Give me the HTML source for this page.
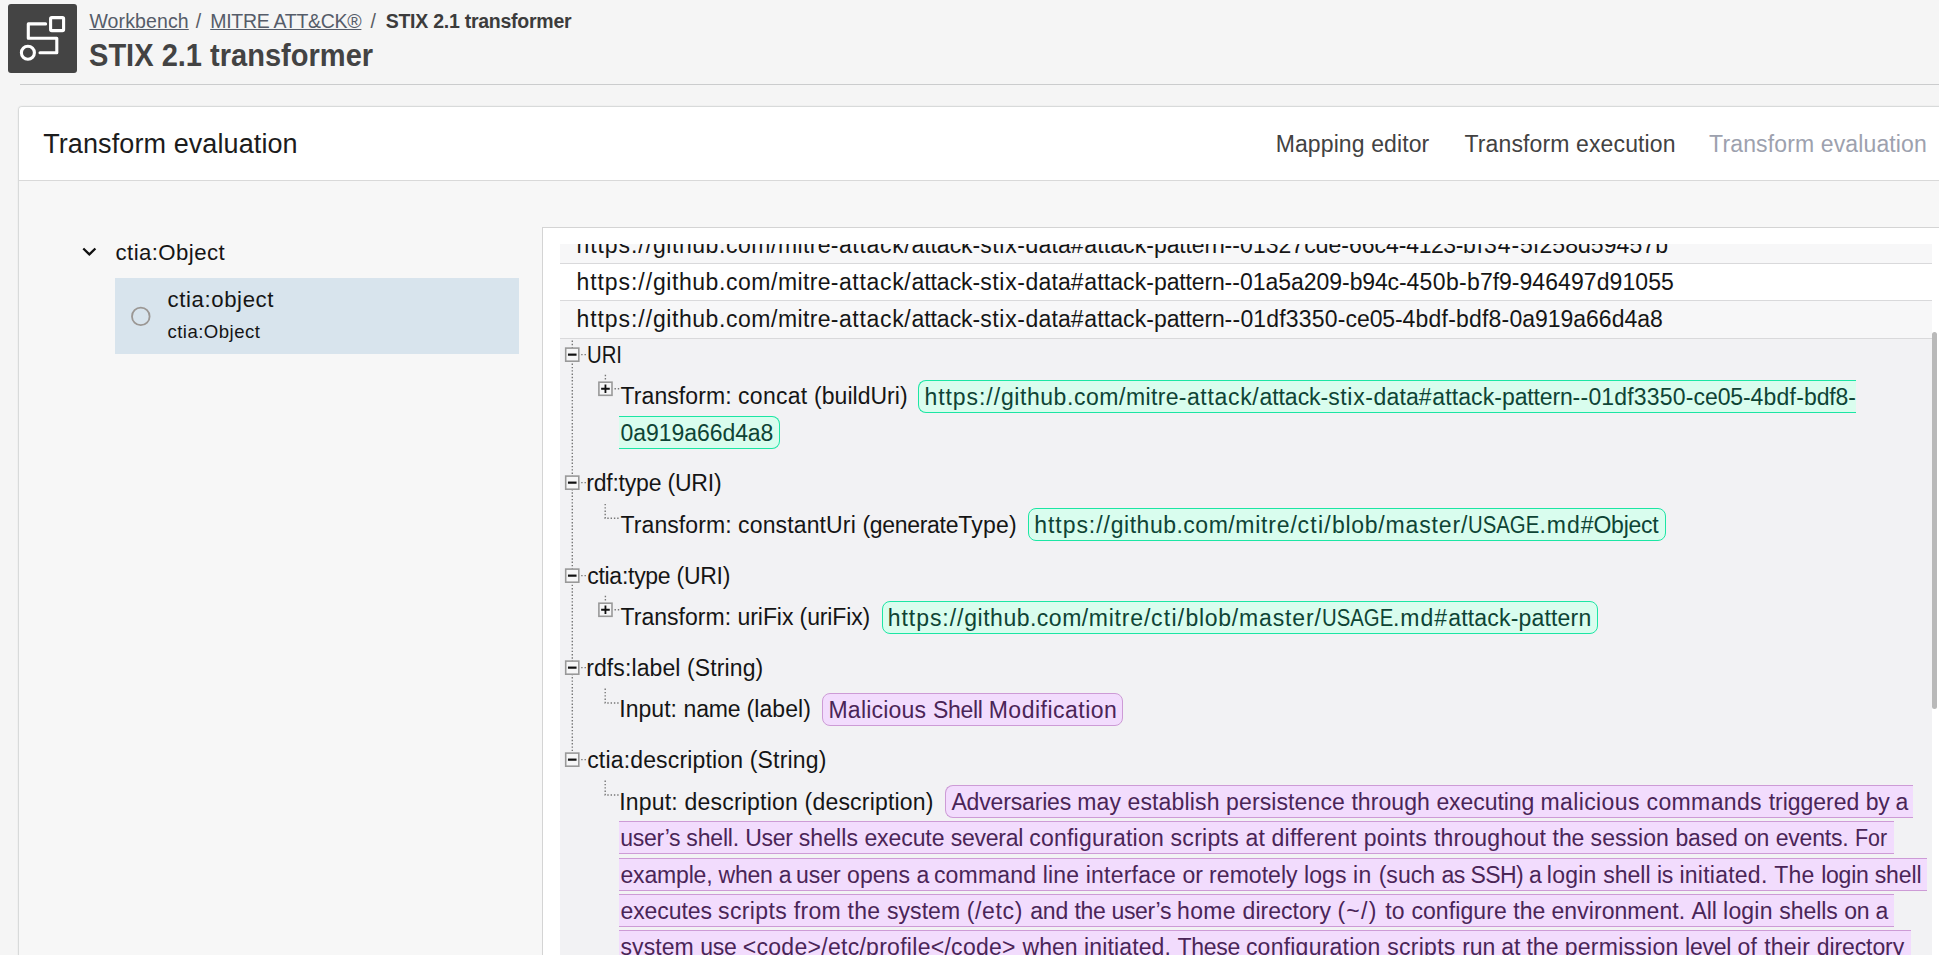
<!DOCTYPE html><html><head><meta charset="utf-8"><title>STIX 2.1 transformer</title><style>
*{box-sizing:border-box;margin:0;padding:0}
html,body{width:1939px;height:955px;overflow:hidden;background:#f5f5f5;font-family:"Liberation Sans",sans-serif;}
body{position:relative}
.a{position:absolute}
.t{position:absolute;white-space:pre;display:block;transform-origin:0 50%}
.u{text-decoration:underline;text-decoration-thickness:1.4px;text-underline-offset:1.2px}
#icon{left:8px;top:4px;width:69px;height:69px;background:#444;border-radius:3px}
#hr{left:20px;top:84px;right:0;height:1px;background:#cbcccd}
#card{left:18px;top:106px;width:1960px;height:900px;background:#f7f7f7;border:1px solid #d8dada;box-shadow:0 0 1.5px rgba(0,0,0,.10);border-radius:4px;overflow:hidden}
#cardhead{left:0;top:0;right:0;height:74px;background:#fff;border-bottom:1px solid #d9d9d9}
#sel{left:115px;top:278px;width:404px;height:76px;background:#d8e4ed}
#panel{left:542px;top:227px;width:1420px;height:760px;background:#fff;border:1px solid #d4d4d4}
.row{left:560px;width:1372px}
#r1{top:244px;height:19.5px;background:#f7f7f8}
#r2{top:264px;height:36.5px;background:#fff}
#r3{top:301px;height:37.5px;background:#f7f7f8}
.rb{left:560px;width:1372px;height:1px;background:#d9d9db}
#detail{left:560px;top:339px;width:1372px;height:620px;background:#f2f2f4}
#thumb{left:1932px;top:332px;width:5px;height:377px;border-radius:2.5px;background:#b9b9b9}
.chip{position:absolute;border:1px solid}
.g{background:#d9fdee;border-color:#1ce6a4}
.p{background:#f2dcfd;border-color:#cd9bd6}
</style></head><body>
<div class="a" id="icon"><svg width="69" height="69" viewBox="0 0 69 69" style="position:absolute;left:0;top:0"><g fill="none" stroke="#fff" stroke-width="3.1" stroke-linejoin="round" stroke-linecap="round"><rect x="42.6" y="13.6" width="13" height="13" rx="1.2"/><circle cx="19.9" cy="48.8" r="6.5"/><path d="M37.6 19.9H20.3V34.3H48.8V48.8H32"/></g></svg></div>
<div class="a" id="hr"></div>
<div class="a" id="card"><div class="a" id="cardhead"></div></div>
<div class="a" id="sel"></div>
<svg class="a" style="left:0;top:0" width="130" height="280" viewBox="0 0 130 280"><path transform="translate(75.65 237.83) scale(1.1417)" d="M16.59 8.59L12 13.17 7.41 8.59 6 10l6 6 6-6z" fill="#111"/></svg>
<div class="a" id="panel"></div>
<div class="a row" id="r1"></div><div class="a rb" style="top:263px"></div>
<div class="a row" id="r2"></div><div class="a rb" style="top:300px"></div>
<div class="a row" id="r3"></div><div class="a rb" style="top:338px"></div>
<div class="a" id="detail"></div>
<div class="a" id="thumb"></div>
<div class="chip g" style="left:917.8px;top:380px;width:938.2px;height:33px;border-radius:8px 0px 0px 8px;border-right:0;"></div>
<div class="chip g" style="left:619px;top:416px;width:160.8px;height:33px;border-radius:0px 8px 8px 0px;border-left:0;"></div>
<div class="chip g" style="left:1027.9px;top:508px;width:637.9px;height:33px;border-radius:8px 8px 8px 8px;"></div>
<div class="chip g" style="left:881.9px;top:601px;width:716.1px;height:33px;border-radius:8px 8px 8px 8px;"></div>
<div class="chip p" style="left:822.4px;top:693px;width:300.2px;height:33px;border-radius:8px 8px 8px 8px;"></div>
<div class="chip p" style="left:945px;top:785px;width:967.7px;height:33px;border-radius:8px 0px 0px 8px;border-right:0;"></div>
<div class="chip p" style="left:619px;top:821px;width:1274.8px;height:33px;border-radius:0px 0px 0px 0px;border-left:0;border-right:0;"></div>
<div class="chip p" style="left:619px;top:858px;width:1308.1px;height:33px;border-radius:0px 0px 0px 0px;border-left:0;border-right:0;"></div>
<div class="chip p" style="left:619px;top:894px;width:1274.8px;height:33px;border-radius:0px 0px 0px 0px;border-left:0;border-right:0;"></div>
<div class="chip p" style="left:619px;top:930px;width:1292.1px;height:33px;border-radius:0px 0px 0px 0px;border-left:0;border-right:0;"></div>
<svg class="a" style="left:0;top:0" width="1939" height="955" viewBox="0 0 1939 955"><path d="M572.3 340.5V752.0" stroke="#777777" stroke-width="1.4" stroke-dasharray="1.4 1.9" fill="none"/><rect x="565.70" y="348.10" width="13.10" height="13.10" fill="#f6f6f7" stroke="#999999" stroke-width="1.6"/><path d="M567.95 354.65H576.55" stroke="#111" stroke-width="2.2" fill="none"/><path d="M581.2 354.6H587.0" stroke="#777777" stroke-width="1.4" stroke-dasharray="1.4 1.9" fill="none"/><rect x="565.70" y="476.10" width="13.10" height="13.10" fill="#f6f6f7" stroke="#999999" stroke-width="1.6"/><path d="M567.95 482.65H576.55" stroke="#111" stroke-width="2.2" fill="none"/><path d="M581.2 482.6H587.0" stroke="#777777" stroke-width="1.4" stroke-dasharray="1.4 1.9" fill="none"/><rect x="565.70" y="569.10" width="13.10" height="13.10" fill="#f6f6f7" stroke="#999999" stroke-width="1.6"/><path d="M567.95 575.65H576.55" stroke="#111" stroke-width="2.2" fill="none"/><path d="M581.2 575.6H587.0" stroke="#777777" stroke-width="1.4" stroke-dasharray="1.4 1.9" fill="none"/><rect x="565.70" y="661.10" width="13.10" height="13.10" fill="#f6f6f7" stroke="#999999" stroke-width="1.6"/><path d="M567.95 667.65H576.55" stroke="#111" stroke-width="2.2" fill="none"/><path d="M581.2 667.6H587.0" stroke="#777777" stroke-width="1.4" stroke-dasharray="1.4 1.9" fill="none"/><rect x="565.70" y="753.10" width="13.10" height="13.10" fill="#f6f6f7" stroke="#999999" stroke-width="1.6"/><path d="M567.95 759.65H576.55" stroke="#111" stroke-width="2.2" fill="none"/><path d="M581.2 759.6H587.0" stroke="#777777" stroke-width="1.4" stroke-dasharray="1.4 1.9" fill="none"/><path d="M605.4 374.8V381.0" stroke="#777777" stroke-width="1.4" stroke-dasharray="1.4 1.9" fill="none"/><rect x="598.90" y="382.20" width="13.10" height="13.10" fill="#f6f6f7" stroke="#999999" stroke-width="1.6"/><path d="M601.15 388.75H609.75M605.45 384.55V392.95" stroke="#111" stroke-width="1.8" fill="none"/><path d="M614.5 388.7H620.0" stroke="#777777" stroke-width="1.4" stroke-dasharray="1.4 1.9" fill="none"/><path d="M605.4 595.8V602.0" stroke="#777777" stroke-width="1.4" stroke-dasharray="1.4 1.9" fill="none"/><rect x="598.90" y="603.20" width="13.10" height="13.10" fill="#f6f6f7" stroke="#999999" stroke-width="1.6"/><path d="M601.15 609.75H609.75M605.45 605.55V613.95" stroke="#111" stroke-width="1.8" fill="none"/><path d="M614.5 609.7H620.0" stroke="#777777" stroke-width="1.4" stroke-dasharray="1.4 1.9" fill="none"/><path d="M605.2 503.9V518.3H619" stroke="#777777" stroke-width="1.4" stroke-dasharray="1.4 1.9" fill="none"/><path d="M605.2 688.6V703.0H619" stroke="#777777" stroke-width="1.4" stroke-dasharray="1.4 1.9" fill="none"/><path d="M605.2 780.6V795.0H619" stroke="#777777" stroke-width="1.4" stroke-dasharray="1.4 1.9" fill="none"/><circle cx="140.8" cy="316.4" r="8.8" fill="none" stroke="#9b9794" stroke-width="1.8"/></svg>
<span class="t" style="left:576.50px;top:230px;font-size:23px;line-height:30px;color:#151515;letter-spacing:0.933px;">https://</span>
<span class="t" style="left:653.00px;top:230px;font-size:23px;line-height:30px;color:#151515;letter-spacing:0.546px;">github.com/</span>
<span class="t" style="left:777.90px;top:230px;font-size:23px;line-height:30px;color:#151515;letter-spacing:0.372px;">mitre-</span>
<span class="t" style="left:838.90px;top:230px;font-size:23px;line-height:30px;color:#151515;letter-spacing:0.678px;">attack/</span>
<span class="t" style="left:911.40px;top:230px;font-size:23px;line-height:30px;color:#151515;letter-spacing:-0.032px;">attack-</span>
<span class="t" style="left:980.20px;top:230px;font-size:23px;line-height:30px;color:#151515;letter-spacing:0.648px;">stix-</span>
<span class="t" style="left:1025.60px;top:230px;font-size:23px;line-height:30px;color:#151515;letter-spacing:0.109px;">data</span>
<span class="t" style="left:1070.80px;top:230px;font-size:23px;line-height:30px;color:#151515;letter-spacing:0.708px;">#</span>
<span class="t" style="left:1084.30px;top:230px;font-size:23px;line-height:30px;color:#151515;letter-spacing:0.111px;">attack-</span>
<span class="t" style="left:1154.10px;top:230px;font-size:23px;line-height:30px;color:#151515;letter-spacing:-0.158px;">pattern</span>
<span class="t" style="left:1224.60px;top:230px;font-size:23px;line-height:30px;color:#151515;letter-spacing:0.091px;">--</span>
<span class="t" style="left:1240.10px;top:230px;font-size:23px;line-height:30px;color:#151515;letter-spacing:0.022px;">01327cde-</span>
<span class="t" style="left:1349.00px;top:230px;font-size:23px;line-height:30px;color:#151515;letter-spacing:-0.047px;">66c4-</span>
<span class="t" style="left:1406.30px;top:230px;font-size:23px;line-height:30px;color:#151515;letter-spacing:-0.445px;">4123-</span>
<span class="t" style="left:1462.90px;top:230px;font-size:23px;line-height:30px;color:#151515;letter-spacing:0.955px;">bf34-</span>
<span class="t" style="left:1520.10px;top:230px;font-size:23px;line-height:30px;color:#151515;letter-spacing:0.072px;">5f258d59457b</span>
<div class="a" style="left:543px;top:228px;width:1396px;height:16px;background:#fff"></div>
<span class="t u" style="left:89.40px;top:8px;font-size:19.5px;line-height:26px;color:#555c69;letter-spacing:0.122px;">Workbench</span>
<span class="t" style="left:195.80px;top:8px;font-size:19.5px;line-height:26px;color:#5a5d64;">/</span>
<span class="t u" style="left:210.20px;top:8px;font-size:19.5px;line-height:26px;color:#555c69;letter-spacing:-0.280px;">MITRE ATT&amp;CK®</span>
<span class="t" style="left:370.40px;top:8px;font-size:19.5px;line-height:26px;color:#5a5d64;">/</span>
<span class="t" style="left:385.70px;top:8px;font-size:19.5px;line-height:26px;color:#3c3c3c;letter-spacing:-0.255px;font-weight:700;">STIX 2.1 transformer</span>
<span class="t" style="left:89.40px;top:36px;font-size:30.7px;line-height:39px;color:#434343;transform:scaleX(0.9466);font-weight:700;">STIX 2.1 transformer</span>
<span class="t" style="left:43.20px;top:127px;font-size:27px;line-height:34px;color:#1c1c1c;letter-spacing:0.095px;">Transform evaluation</span>
<span class="t" style="left:1275.70px;top:129px;font-size:23px;line-height:30px;color:#424242;letter-spacing:0.108px;">Mapping editor</span>
<span class="t" style="left:1464.50px;top:129px;font-size:23px;line-height:30px;color:#424242;letter-spacing:0.123px;">Transform execution</span>
<span class="t" style="left:1709.10px;top:129px;font-size:23px;line-height:30px;color:#9da1ae;letter-spacing:0.132px;">Transform evaluation</span>
<span class="t" style="left:115.60px;top:238px;font-size:22.2px;line-height:29px;color:#151515;letter-spacing:0.415px;">ctia:Object</span>
<span class="t" style="left:167.50px;top:285px;font-size:22.2px;line-height:29px;color:#151515;letter-spacing:0.607px;">ctia:object</span>
<span class="t" style="left:167.50px;top:319px;font-size:18.6px;line-height:25px;color:#151515;letter-spacing:0.453px;">ctia:Object</span>
<span class="t" style="left:576.50px;top:267px;font-size:23px;line-height:30px;color:#151515;letter-spacing:0.933px;">https://</span>
<span class="t" style="left:653.00px;top:267px;font-size:23px;line-height:30px;color:#151515;letter-spacing:0.546px;">github.com/</span>
<span class="t" style="left:777.90px;top:267px;font-size:23px;line-height:30px;color:#151515;letter-spacing:0.372px;">mitre-</span>
<span class="t" style="left:838.90px;top:267px;font-size:23px;line-height:30px;color:#151515;letter-spacing:0.678px;">attack/</span>
<span class="t" style="left:911.40px;top:267px;font-size:23px;line-height:30px;color:#151515;letter-spacing:-0.032px;">attack-</span>
<span class="t" style="left:980.20px;top:267px;font-size:23px;line-height:30px;color:#151515;letter-spacing:0.648px;">stix-</span>
<span class="t" style="left:1025.60px;top:267px;font-size:23px;line-height:30px;color:#151515;letter-spacing:0.109px;">data</span>
<span class="t" style="left:1070.80px;top:267px;font-size:23px;line-height:30px;color:#151515;letter-spacing:0.708px;">#</span>
<span class="t" style="left:1084.30px;top:267px;font-size:23px;line-height:30px;color:#151515;letter-spacing:0.111px;">attack-</span>
<span class="t" style="left:1154.10px;top:267px;font-size:23px;line-height:30px;color:#151515;letter-spacing:-0.158px;">pattern</span>
<span class="t" style="left:1224.60px;top:267px;font-size:23px;line-height:30px;color:#151515;letter-spacing:0.091px;">--</span>
<span class="t" style="left:1240.10px;top:267px;font-size:23px;line-height:30px;color:#151515;letter-spacing:-0.043px;">01a5a209-</span>
<span class="t" style="left:1349.70px;top:267px;font-size:23px;line-height:30px;color:#151515;letter-spacing:-0.167px;">b94c-</span>
<span class="t" style="left:1406.40px;top:267px;font-size:23px;line-height:30px;color:#151515;letter-spacing:0.375px;">450b-</span>
<span class="t" style="left:1467.10px;top:267px;font-size:23px;line-height:30px;color:#151515;letter-spacing:-0.005px;">b7f9-</span>
<span class="t" style="left:1519.50px;top:267px;font-size:23px;line-height:30px;color:#151515;letter-spacing:0.081px;">946497d91055</span>
<span class="t" style="left:576.50px;top:304px;font-size:23px;line-height:30px;color:#151515;letter-spacing:0.933px;">https://</span>
<span class="t" style="left:653.00px;top:304px;font-size:23px;line-height:30px;color:#151515;letter-spacing:0.546px;">github.com/</span>
<span class="t" style="left:777.90px;top:304px;font-size:23px;line-height:30px;color:#151515;letter-spacing:0.372px;">mitre-</span>
<span class="t" style="left:838.90px;top:304px;font-size:23px;line-height:30px;color:#151515;letter-spacing:0.678px;">attack/</span>
<span class="t" style="left:911.40px;top:304px;font-size:23px;line-height:30px;color:#151515;letter-spacing:-0.032px;">attack-</span>
<span class="t" style="left:980.20px;top:304px;font-size:23px;line-height:30px;color:#151515;letter-spacing:0.648px;">stix-</span>
<span class="t" style="left:1025.60px;top:304px;font-size:23px;line-height:30px;color:#151515;letter-spacing:0.109px;">data</span>
<span class="t" style="left:1070.80px;top:304px;font-size:23px;line-height:30px;color:#151515;letter-spacing:0.708px;">#</span>
<span class="t" style="left:1084.30px;top:304px;font-size:23px;line-height:30px;color:#151515;letter-spacing:0.111px;">attack-</span>
<span class="t" style="left:1154.10px;top:304px;font-size:23px;line-height:30px;color:#151515;letter-spacing:-0.158px;">pattern</span>
<span class="t" style="left:1224.60px;top:304px;font-size:23px;line-height:30px;color:#151515;letter-spacing:0.241px;">--</span>
<span class="t" style="left:1240.40px;top:304px;font-size:23px;line-height:30px;color:#151515;letter-spacing:0.179px;">01df3350-</span>
<span class="t" style="left:1345.60px;top:304px;font-size:23px;line-height:30px;color:#151515;letter-spacing:-0.107px;">ce05-</span>
<span class="t" style="left:1402.60px;top:304px;font-size:23px;line-height:30px;color:#151515;letter-spacing:0.215px;">4bdf-</span>
<span class="t" style="left:1456.10px;top:304px;font-size:23px;line-height:30px;color:#151515;letter-spacing:0.175px;">bdf8-</span>
<span class="t" style="left:1509.40px;top:304px;font-size:23px;line-height:30px;color:#151515;letter-spacing:-0.010px;">0a919a66d4a8</span>
<span class="t" style="left:586.52px;top:340px;font-size:23px;line-height:30px;color:#151515;transform:scaleX(0.8839);">URI</span>
<span class="t" style="left:620.50px;top:381px;font-size:23px;line-height:30px;color:#151515;letter-spacing:0.080px;">Transform: </span>
<span class="t" style="left:738.10px;top:381px;font-size:23px;line-height:30px;color:#151515;letter-spacing:0.264px;">concat </span>
<span class="t" style="left:814.10px;top:381px;font-size:23px;line-height:30px;color:#151515;letter-spacing:0.019px;">(buildUri)</span>
<span class="t" style="left:924.50px;top:382px;font-size:23px;line-height:30px;color:#0e4435;letter-spacing:0.933px;">https://</span>
<span class="t" style="left:1001.00px;top:382px;font-size:23px;line-height:30px;color:#0e4435;letter-spacing:0.546px;">github.com/</span>
<span class="t" style="left:1125.90px;top:382px;font-size:23px;line-height:30px;color:#0e4435;letter-spacing:0.372px;">mitre-</span>
<span class="t" style="left:1186.90px;top:382px;font-size:23px;line-height:30px;color:#0e4435;letter-spacing:0.678px;">attack/</span>
<span class="t" style="left:1259.40px;top:382px;font-size:23px;line-height:30px;color:#0e4435;letter-spacing:-0.032px;">attack-</span>
<span class="t" style="left:1328.20px;top:382px;font-size:23px;line-height:30px;color:#0e4435;letter-spacing:0.648px;">stix-</span>
<span class="t" style="left:1373.60px;top:382px;font-size:23px;line-height:30px;color:#0e4435;letter-spacing:0.109px;">data</span>
<span class="t" style="left:1418.80px;top:382px;font-size:23px;line-height:30px;color:#0e4435;letter-spacing:0.708px;">#</span>
<span class="t" style="left:1432.30px;top:382px;font-size:23px;line-height:30px;color:#0e4435;letter-spacing:0.111px;">attack-</span>
<span class="t" style="left:1502.10px;top:382px;font-size:23px;line-height:30px;color:#0e4435;letter-spacing:-0.158px;">pattern</span>
<span class="t" style="left:1572.60px;top:382px;font-size:23px;line-height:30px;color:#0e4435;letter-spacing:0.241px;">--</span>
<span class="t" style="left:1588.40px;top:382px;font-size:23px;line-height:30px;color:#0e4435;letter-spacing:0.179px;">01df3350-</span>
<span class="t" style="left:1693.60px;top:382px;font-size:23px;line-height:30px;color:#0e4435;letter-spacing:-0.107px;">ce05-</span>
<span class="t" style="left:1750.60px;top:382px;font-size:23px;line-height:30px;color:#0e4435;letter-spacing:0.215px;">4bdf-</span>
<span class="t" style="left:1804.10px;top:382px;font-size:23px;line-height:30px;color:#0e4435;letter-spacing:-0.166px;">bdf8-</span>
<span class="t" style="left:620.60px;top:418px;font-size:23px;line-height:30px;color:#0e4435;letter-spacing:-0.064px;">0a919a66d4a8</span>
<span class="t" style="left:586.20px;top:468px;font-size:23px;line-height:30px;color:#151515;letter-spacing:-0.205px;">rdf:type (URI)</span>
<span class="t" style="left:620.50px;top:510px;font-size:23px;line-height:30px;color:#151515;letter-spacing:0.080px;">Transform: </span>
<span class="t" style="left:738.10px;top:510px;font-size:23px;line-height:30px;color:#151515;letter-spacing:0.132px;">constantUri </span>
<span class="t" style="left:862.40px;top:510px;font-size:23px;line-height:30px;color:#151515;letter-spacing:-0.295px;">(generate</span>
<span class="t" style="left:958.20px;top:510px;font-size:23px;line-height:30px;color:#151515;letter-spacing:0.234px;">Type)</span>
<span class="t" style="left:1034.30px;top:510px;font-size:23px;line-height:30px;color:#0e4435;letter-spacing:0.933px;">https://</span>
<span class="t" style="left:1110.80px;top:510px;font-size:23px;line-height:30px;color:#0e4435;letter-spacing:0.500px;">github.com/</span>
<span class="t" style="left:1235.20px;top:510px;font-size:23px;line-height:30px;color:#0e4435;letter-spacing:0.817px;">mitre/</span>
<span class="t" style="left:1297.60px;top:510px;font-size:23px;line-height:30px;color:#0e4435;letter-spacing:1.227px;">cti/</span>
<span class="t" style="left:1331.90px;top:510px;font-size:23px;line-height:30px;color:#0e4435;letter-spacing:0.745px;">blob/</span>
<span class="t" style="left:1385.50px;top:510px;font-size:23px;line-height:30px;color:#0e4435;letter-spacing:0.860px;">master/</span>
<span class="t" style="left:1468.32px;top:510px;font-size:23px;line-height:30px;color:#0e4435;transform:scaleX(0.8842);">USAGE</span>
<span class="t" style="left:1539.40px;top:510px;font-size:23px;line-height:30px;color:#0e4435;letter-spacing:0.986px;">.md</span>
<span class="t" style="left:1580.70px;top:510px;font-size:23px;line-height:30px;color:#0e4435;letter-spacing:0.008px;">#</span>
<span class="t" style="left:1593.50px;top:510px;font-size:23px;line-height:30px;color:#0e4435;letter-spacing:-0.277px;">Object</span>
<span class="t" style="left:587.20px;top:561px;font-size:23px;line-height:30px;color:#151515;letter-spacing:-0.272px;">ctia:type (URI)</span>
<span class="t" style="left:620.50px;top:602px;font-size:23px;line-height:30px;color:#151515;letter-spacing:0.035px;">Transform: </span>
<span class="t" style="left:737.60px;top:602px;font-size:23px;line-height:30px;color:#151515;letter-spacing:-0.087px;">uriFix </span>
<span class="t" style="left:799.60px;top:602px;font-size:23px;line-height:30px;color:#151515;letter-spacing:-0.126px;">(uriFix)</span>
<span class="t" style="left:887.80px;top:603px;font-size:23px;line-height:30px;color:#0e4435;letter-spacing:0.933px;">https://</span>
<span class="t" style="left:964.30px;top:603px;font-size:23px;line-height:30px;color:#0e4435;letter-spacing:0.500px;">github.com/</span>
<span class="t" style="left:1088.70px;top:603px;font-size:23px;line-height:30px;color:#0e4435;letter-spacing:0.817px;">mitre/</span>
<span class="t" style="left:1151.10px;top:603px;font-size:23px;line-height:30px;color:#0e4435;letter-spacing:1.227px;">cti/</span>
<span class="t" style="left:1185.40px;top:603px;font-size:23px;line-height:30px;color:#0e4435;letter-spacing:0.745px;">blob/</span>
<span class="t" style="left:1239.00px;top:603px;font-size:23px;line-height:30px;color:#0e4435;letter-spacing:0.860px;">master/</span>
<span class="t" style="left:1321.82px;top:603px;font-size:23px;line-height:30px;color:#0e4435;transform:scaleX(0.8842);">USAGE</span>
<span class="t" style="left:1392.90px;top:603px;font-size:23px;line-height:30px;color:#0e4435;letter-spacing:0.986px;">.md</span>
<span class="t" style="left:1434.20px;top:603px;font-size:23px;line-height:30px;color:#0e4435;letter-spacing:1.208px;">#</span>
<span class="t" style="left:1448.20px;top:603px;font-size:23px;line-height:30px;color:#0e4435;letter-spacing:0.183px;">attack-</span>
<span class="t" style="left:1518.50px;top:603px;font-size:23px;line-height:30px;color:#0e4435;letter-spacing:0.181px;">pattern</span>
<span class="t" style="left:586.20px;top:653px;font-size:23px;line-height:30px;color:#151515;letter-spacing:0.108px;">rdfs:label (String)</span>
<span class="t" style="left:619.20px;top:694px;font-size:23px;line-height:30px;color:#151515;letter-spacing:0.052px;">Input: </span>
<span class="t" style="left:683.50px;top:694px;font-size:23px;line-height:30px;color:#151515;letter-spacing:-0.165px;">name </span>
<span class="t" style="left:746.60px;top:694px;font-size:23px;line-height:30px;color:#151515;letter-spacing:0.058px;">(label)</span>
<span class="t" style="left:828.50px;top:695px;font-size:23px;line-height:30px;color:#4a2557;letter-spacing:0.215px;">Malicious </span>
<span class="t" style="left:932.90px;top:695px;font-size:23px;line-height:30px;color:#4a2557;letter-spacing:-0.289px;">Shell </span>
<span class="t" style="left:988.70px;top:695px;font-size:23px;line-height:30px;color:#4a2557;letter-spacing:0.497px;">Modification</span>
<span class="t" style="left:587.20px;top:745px;font-size:23px;line-height:30px;color:#151515;letter-spacing:0.165px;">ctia:description (String)</span>
<span class="t" style="left:619.20px;top:787px;font-size:23px;line-height:30px;color:#151515;letter-spacing:0.195px;">Input: </span>
<span class="t" style="left:684.50px;top:787px;font-size:23px;line-height:30px;color:#151515;letter-spacing:0.207px;">description </span>
<span class="t" style="left:804.60px;top:787px;font-size:23px;line-height:30px;color:#151515;letter-spacing:0.193px;">(description)</span>
<span class="t" style="left:951.40px;top:787px;font-size:23px;line-height:30px;color:#4a2557;letter-spacing:-0.160px;">Adversaries </span>
<span class="t" style="left:1077.30px;top:787px;font-size:23px;line-height:30px;color:#4a2557;letter-spacing:0.090px;">may </span>
<span class="t" style="left:1127.50px;top:787px;font-size:23px;line-height:30px;color:#4a2557;letter-spacing:0.143px;">establish </span>
<span class="t" style="left:1226.10px;top:787px;font-size:23px;line-height:30px;color:#4a2557;letter-spacing:0.108px;">persistence </span>
<span class="t" style="left:1351.40px;top:787px;font-size:23px;line-height:30px;color:#4a2557;letter-spacing:0.075px;">through </span>
<span class="t" style="left:1436.40px;top:787px;font-size:23px;line-height:30px;color:#4a2557;letter-spacing:-0.075px;">executing </span>
<span class="t" style="left:1540.50px;top:787px;font-size:23px;line-height:30px;color:#4a2557;letter-spacing:0.385px;">malicious </span>
<span class="t" style="left:1646.60px;top:787px;font-size:23px;line-height:30px;color:#4a2557;letter-spacing:0.358px;">commands </span>
<span class="t" style="left:1768.70px;top:787px;font-size:23px;line-height:30px;color:#4a2557;letter-spacing:-0.017px;">triggered </span>
<span class="t" style="left:1865.70px;top:787px;font-size:23px;line-height:30px;color:#4a2557;letter-spacing:-0.294px;">by </span>
<span class="t" style="left:1895.50px;top:787px;font-size:23px;line-height:30px;color:#4a2557;">a</span>
<span class="t" style="left:620.30px;top:823px;font-size:23px;line-height:30px;color:#4a2557;letter-spacing:-0.311px;">user’s </span>
<span class="t" style="left:686.30px;top:823px;font-size:23px;line-height:30px;color:#4a2557;letter-spacing:-0.155px;">shell. </span>
<span class="t" style="left:745.30px;top:823px;font-size:23px;line-height:30px;color:#4a2557;letter-spacing:-0.290px;">User </span>
<span class="t" style="left:798.80px;top:823px;font-size:23px;line-height:30px;color:#4a2557;letter-spacing:0.058px;">shells </span>
<span class="t" style="left:864.40px;top:823px;font-size:23px;line-height:30px;color:#4a2557;letter-spacing:-0.081px;">execute </span>
<span class="t" style="left:950.70px;top:823px;font-size:23px;line-height:30px;color:#4a2557;letter-spacing:-0.254px;">several </span>
<span class="t" style="left:1029.20px;top:823px;font-size:23px;line-height:30px;color:#4a2557;letter-spacing:0.236px;">configuration </span>
<span class="t" style="left:1170.60px;top:823px;font-size:23px;line-height:30px;color:#4a2557;letter-spacing:0.270px;">scripts </span>
<span class="t" style="left:1245.60px;top:823px;font-size:23px;line-height:30px;color:#4a2557;letter-spacing:0.076px;">at </span>
<span class="t" style="left:1271.40px;top:823px;font-size:23px;line-height:30px;color:#4a2557;letter-spacing:0.322px;">different </span>
<span class="t" style="left:1363.70px;top:823px;font-size:23px;line-height:30px;color:#4a2557;letter-spacing:0.348px;">points </span>
<span class="t" style="left:1433.90px;top:823px;font-size:23px;line-height:30px;color:#4a2557;letter-spacing:0.212px;">throughout </span>
<span class="t" style="left:1552.60px;top:823px;font-size:23px;line-height:30px;color:#4a2557;letter-spacing:-0.091px;">the </span>
<span class="t" style="left:1590.60px;top:823px;font-size:23px;line-height:30px;color:#4a2557;letter-spacing:0.053px;">session </span>
<span class="t" style="left:1675.40px;top:823px;font-size:23px;line-height:30px;color:#4a2557;letter-spacing:-0.093px;">based </span>
<span class="t" style="left:1743.90px;top:823px;font-size:23px;line-height:30px;color:#4a2557;letter-spacing:-0.058px;">on </span>
<span class="t" style="left:1775.70px;top:823px;font-size:23px;line-height:30px;color:#4a2557;letter-spacing:-0.193px;">events. </span>
<span class="t" style="left:1854.77px;top:823px;font-size:23px;line-height:30px;color:#4a2557;transform:scaleX(0.9338);">For</span>
<span class="t" style="left:620.50px;top:860px;font-size:23px;line-height:30px;color:#4a2557;letter-spacing:-0.179px;">example, </span>
<span class="t" style="left:718.60px;top:860px;font-size:23px;line-height:30px;color:#4a2557;letter-spacing:-0.235px;">when </span>
<span class="t" style="left:778.80px;top:860px;font-size:23px;line-height:30px;color:#4a2557;letter-spacing:-0.941px;">a </span>
<span class="t" style="left:796.10px;top:860px;font-size:23px;line-height:30px;color:#4a2557;letter-spacing:-0.026px;">user </span>
<span class="t" style="left:847.10px;top:860px;font-size:23px;line-height:30px;color:#4a2557;letter-spacing:0.041px;">opens </span>
<span class="t" style="left:916.40px;top:860px;font-size:23px;line-height:30px;color:#4a2557;letter-spacing:-0.841px;">a </span>
<span class="t" style="left:933.90px;top:860px;font-size:23px;line-height:30px;color:#4a2557;letter-spacing:0.178px;">command </span>
<span class="t" style="left:1042.70px;top:860px;font-size:23px;line-height:30px;color:#4a2557;letter-spacing:0.161px;">line </span>
<span class="t" style="left:1085.70px;top:860px;font-size:23px;line-height:30px;color:#4a2557;letter-spacing:0.229px;">interface </span>
<span class="t" style="left:1182.60px;top:860px;font-size:23px;line-height:30px;color:#4a2557;letter-spacing:-0.114px;">or </span>
<span class="t" style="left:1209.10px;top:860px;font-size:23px;line-height:30px;color:#4a2557;letter-spacing:0.046px;">remotely </span>
<span class="t" style="left:1304.10px;top:860px;font-size:23px;line-height:30px;color:#4a2557;letter-spacing:0.043px;">logs </span>
<span class="t" style="left:1352.90px;top:860px;font-size:23px;line-height:30px;color:#4a2557;letter-spacing:0.503px;">in </span>
<span class="t" style="left:1378.70px;top:860px;font-size:23px;line-height:30px;color:#4a2557;letter-spacing:0.028px;">(such </span>
<span class="t" style="left:1441.50px;top:860px;font-size:23px;line-height:30px;color:#4a2557;letter-spacing:-0.561px;">as </span>
<span class="t" style="left:1470.50px;top:860px;font-size:23px;line-height:30px;color:#4a2557;letter-spacing:-0.568px;">SSH) </span>
<span class="t" style="left:1529.00px;top:860px;font-size:23px;line-height:30px;color:#4a2557;letter-spacing:-0.691px;">a </span>
<span class="t" style="left:1546.80px;top:860px;font-size:23px;line-height:30px;color:#4a2557;letter-spacing:0.253px;">login </span>
<span class="t" style="left:1603.30px;top:860px;font-size:23px;line-height:30px;color:#4a2557;letter-spacing:-0.015px;">shell </span>
<span class="t" style="left:1656.90px;top:860px;font-size:23px;line-height:30px;color:#4a2557;letter-spacing:-0.167px;">is </span>
<span class="t" style="left:1679.40px;top:860px;font-size:23px;line-height:30px;color:#4a2557;letter-spacing:0.249px;">initiated. </span>
<span class="t" style="left:1774.20px;top:860px;font-size:23px;line-height:30px;color:#4a2557;letter-spacing:0.244px;">The </span>
<span class="t" style="left:1821.20px;top:860px;font-size:23px;line-height:30px;color:#4a2557;letter-spacing:-0.247px;">login </span>
<span class="t" style="left:1874.70px;top:860px;font-size:23px;line-height:30px;color:#4a2557;letter-spacing:-0.098px;">shell</span>
<span class="t" style="left:620.50px;top:896px;font-size:23px;line-height:30px;color:#4a2557;letter-spacing:-0.094px;">executes </span>
<span class="t" style="left:718.10px;top:896px;font-size:23px;line-height:30px;color:#4a2557;letter-spacing:0.357px;">scripts </span>
<span class="t" style="left:793.80px;top:896px;font-size:23px;line-height:30px;color:#4a2557;letter-spacing:0.282px;">from </span>
<span class="t" style="left:847.60px;top:896px;font-size:23px;line-height:30px;color:#4a2557;letter-spacing:0.234px;">the </span>
<span class="t" style="left:886.90px;top:896px;font-size:23px;line-height:30px;color:#4a2557;letter-spacing:0.081px;">system </span>
<span class="t" style="left:966.70px;top:896px;font-size:23px;line-height:30px;color:#4a2557;letter-spacing:0.674px;">(/etc) </span>
<span class="t" style="left:1030.20px;top:896px;font-size:23px;line-height:30px;color:#4a2557;letter-spacing:-0.116px;">and </span>
<span class="t" style="left:1074.50px;top:896px;font-size:23px;line-height:30px;color:#4a2557;letter-spacing:-0.341px;">the </span>
<span class="t" style="left:1111.50px;top:896px;font-size:23px;line-height:30px;color:#4a2557;letter-spacing:-0.369px;">user’s </span>
<span class="t" style="left:1177.10px;top:896px;font-size:23px;line-height:30px;color:#4a2557;letter-spacing:0.315px;">home </span>
<span class="t" style="left:1242.60px;top:896px;font-size:23px;line-height:30px;color:#4a2557;letter-spacing:0.022px;">directory </span>
<span class="t" style="left:1337.40px;top:896px;font-size:23px;line-height:30px;color:#4a2557;letter-spacing:1.254px;">(~/) </span>
<span class="t" style="left:1385.20px;top:896px;font-size:23px;line-height:30px;color:#4a2557;letter-spacing:0.209px;">to </span>
<span class="t" style="left:1411.40px;top:896px;font-size:23px;line-height:30px;color:#4a2557;letter-spacing:0.089px;">configure </span>
<span class="t" style="left:1513.30px;top:896px;font-size:23px;line-height:30px;color:#4a2557;letter-spacing:-0.041px;">the </span>
<span class="t" style="left:1551.50px;top:896px;font-size:23px;line-height:30px;color:#4a2557;letter-spacing:0.058px;">environment. </span>
<span class="t" style="left:1691.60px;top:896px;font-size:23px;line-height:30px;color:#4a2557;letter-spacing:-0.113px;">All </span>
<span class="t" style="left:1723.10px;top:896px;font-size:23px;line-height:30px;color:#4a2557;letter-spacing:0.186px;">login </span>
<span class="t" style="left:1779.20px;top:896px;font-size:23px;line-height:30px;color:#4a2557;letter-spacing:-0.028px;">shells </span>
<span class="t" style="left:1844.20px;top:896px;font-size:23px;line-height:30px;color:#4a2557;letter-spacing:-0.224px;">on </span>
<span class="t" style="left:1875.50px;top:896px;font-size:23px;line-height:30px;color:#4a2557;">a</span>
<span class="t" style="left:620.50px;top:932px;font-size:23px;line-height:30px;color:#4a2557;letter-spacing:0.081px;">system </span>
<span class="t" style="left:700.30px;top:932px;font-size:23px;line-height:30px;color:#4a2557;letter-spacing:-0.243px;">use </span>
<span class="t" style="left:742.80px;top:932px;font-size:23px;line-height:30px;color:#4a2557;letter-spacing:0.282px;">&lt;code&gt;/etc/profile&lt;/code&gt; </span>
<span class="t" style="left:1022.50px;top:932px;font-size:23px;line-height:30px;color:#4a2557;letter-spacing:0.025px;">when </span>
<span class="t" style="left:1084.00px;top:932px;font-size:23px;line-height:30px;color:#4a2557;letter-spacing:0.140px;">initiated. </span>
<span class="t" style="left:1177.60px;top:932px;font-size:23px;line-height:30px;color:#4a2557;letter-spacing:-0.336px;">These </span>
<span class="t" style="left:1245.90px;top:932px;font-size:23px;line-height:30px;color:#4a2557;letter-spacing:0.229px;">configuration </span>
<span class="t" style="left:1387.20px;top:932px;font-size:23px;line-height:30px;color:#4a2557;letter-spacing:0.282px;">scripts </span>
<span class="t" style="left:1462.30px;top:932px;font-size:23px;line-height:30px;color:#4a2557;letter-spacing:-0.183px;">run </span>
<span class="t" style="left:1501.20px;top:932px;font-size:23px;line-height:30px;color:#4a2557;letter-spacing:-0.091px;">at </span>
<span class="t" style="left:1526.50px;top:932px;font-size:23px;line-height:30px;color:#4a2557;letter-spacing:-0.016px;">the </span>
<span class="t" style="left:1564.80px;top:932px;font-size:23px;line-height:30px;color:#4a2557;letter-spacing:0.246px;">permission </span>
<span class="t" style="left:1685.10px;top:932px;font-size:23px;line-height:30px;color:#4a2557;letter-spacing:-0.232px;">level </span>
<span class="t" style="left:1737.40px;top:932px;font-size:23px;line-height:30px;color:#4a2557;letter-spacing:0.409px;">of </span>
<span class="t" style="left:1764.20px;top:932px;font-size:23px;line-height:30px;color:#4a2557;letter-spacing:0.228px;">their </span>
<span class="t" style="left:1816.70px;top:932px;font-size:23px;line-height:30px;color:#4a2557;letter-spacing:-0.087px;">directory</span>
</body></html>
